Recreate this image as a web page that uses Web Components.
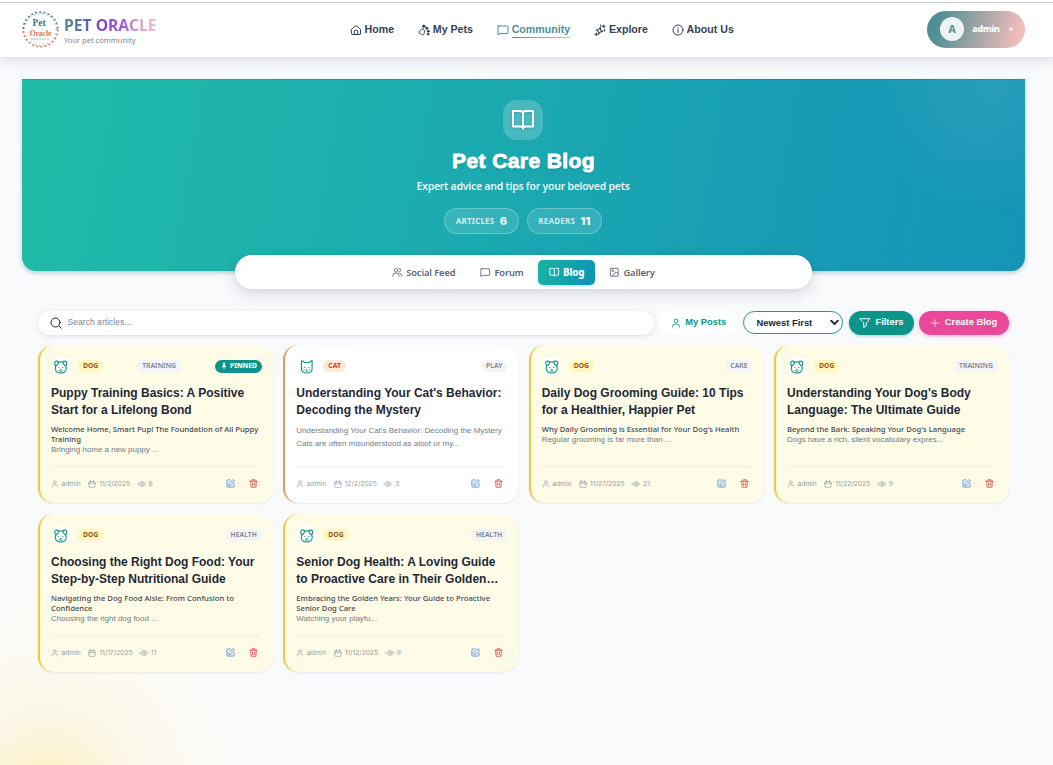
<!DOCTYPE html>
<html lang="en">
<head>
<meta charset="utf-8">
<title>Pet Oracle</title>
<style>
  :root {
    --font-ui: "Noto Sans", "Open Sans", sans-serif;
    --font-head: "Liberation Sans", Arial, sans-serif;
    --teal: #0d9488;
    --ink: #1f2937;
  }
  * { box-sizing: border-box; }
  html, body { height: 100%; }
  body { margin: 0; overflow: hidden; font-family: var(--font-ui); color: var(--ink); }
</style>
</head>
<body>
<pet-app></pet-app>

<script>
/* 24x24 stroke icons, shared by every component through <pet-icon name="…">. */
const ICONS = {
  home: '<path d="M3 10.500 12 3l9 7.500V20a1 1 0 0 1-1 1H4a1 1 0 0 1-1-1z"/><path d="M8.500 21v-7a1.500 1.500 0 0 1 1.500-1.500h4a1.500 1.500 0 0 1 1.500 1.500v7"/>',
  paw: '<path d="M10.500 10.500c-2.500-1.500-5.500.5-5.500 3-3.500.5-4 4.500-1.500 5.500s3 .5 4 2 4.500 1 5-2c.3-2-.5-3 .5-4.500s-.5-3-2.500-4z"/><circle cx="11.500" cy="4.500" r="2.400" fill="currentColor"/><circle cx="17.500" cy="8.500" r="2.200" fill="currentColor"/><circle cx="20.500" cy="14.500" r="1.900" fill="currentColor"/><circle cx="20" cy="20.500" r="1.700" fill="currentColor"/>',
  message: '<path d="M3 4h18a1 1 0 0 1 1 1v13a1 1 0 0 1-1 1H6l-4 3V5a1 1 0 0 1 1-1z"/>',
  sparkles: '<path d="M11 6.500 13 11.500l5 2-5 2-2 5-2-5-5-2 5-2z" transform="rotate(14 11 13.500)"/><path d="M19.500 2v5M17 4.500h5M13.500 2v2.500M21 10.500v3.500M4.500 18v5M2 20.500h5" stroke-width="2.400"/>',
  info: '<circle cx="12" cy="12" r="10"/><path d="M12 11v6M12 7v.5"/>',
  book: '<path d="M12 21V5.500C12 4 10.500 3 9 3H2v15.500h7.500c1.500 0 2.500.8 2.500 2 0-1.200 1-2 2.500-2H22V3h-7c-1.500 0-3 1-3 2.500"/>',
  users: '<circle cx="9" cy="7.500" r="4"/><path d="M2 21v-2a5 5 0 0 1 5-5h4a5 5 0 0 1 5 5v2M16 3.500a4 4 0 0 1 0 8M18 14.500a5 5 0 0 1 4 4.500v2"/>',
  photo: '<rect x="3" y="3" width="18" height="18" rx="2"/><circle cx="8.500" cy="8.500" r="1.800"/><path d="m6 21 10-10 5 5"/>',
  search: '<circle cx="11" cy="11" r="9"/><path d="m18 18 4.500 4.500"/>',
  user: '<circle cx="12" cy="7" r="4.500"/><path d="M4 22v-2.500a4.500 4.500 0 0 1 4.500-4.500h7a4.500 4.500 0 0 1 4.500 4.500V22"/>',
  filter: '<path d="M2 3.500h20l-7.500 9V18L9.500 21v-8.500z"/>',
  plus: '<path d="M12 2v20M2 12h20"/>',
  calendar: '<rect x="2.500" y="5" width="19" height="17" rx="2"/><path d="M2.500 11h19M7.500 2v5M16.500 2v5"/>',
  eye: '<path d="M1 12c3-4.500 6.500-7 11-7s8 2.500 11 7c-3 4.500-6.500 7-11 7s-8-2.500-11-7z"/><circle cx="12" cy="12" r="3.500"/>',
  edit: '<path d="M11 2.500H4.500a2 2 0 0 0-2 2v15a2 2 0 0 0 2 2h15a2 2 0 0 0 2-2V13"/><path d="M8 16.500V12L18.500 1.500l4 4L12.500 16.500z"/>',
  trash: '<path d="M2 6h20M8 6V2h8v4M4.500 6l1 16h13l1-16M9.500 11v6M14.500 11v6"/>',
  pin: '<path d="M8 2h8v2h-1v6l3 3.500V16h-5v6h-2v-6H6v-2.500L9 10V4H8z" fill="currentColor" stroke="none"/>',
  chevron: '<path d="m3 7 9 9 9-9"/>',
  dog: '<path d="M8.500 4C7 1 1.200 1 1.200 5.500c0 2 1 3.500 2 5C5 9.500 7.500 7.500 8.500 4zM15.500 4c1.500-3 7.300-3 7.300 1.500 0 2-1 3.500-2 5-1.800-1-4.300-3-5.300-6.500z"/><path d="M8.500 4c2-.8 5-.8 7 0M3.200 10.500C1.800 13 2 16 3 18.500 4.800 21.800 8 23 12 23s7.200-1.200 9-4.500c1-2.500 1.200-5.500-.2-8"/><path d="M8.500 13v.4M15.500 13v.4M11.500 16.500h1M9.500 19.300c1.500.8 3.500.8 5 0"/>',
  cat: '<path d="M2.500 1.500c2.500.2 4.500 1.500 5.500 3h8c1-1.500 3-2.800 5.500-3V15c0 4.500-3 8-9.500 8s-9.500-3.500-9.500-8z"/><path d="M8.500 13v.4M15.500 13v.4M12 17v.3M7 17.500h.3M16.700 17.500h.3M10.500 19.500h3"/>',
};

function esc(s) {
  return String(s).replace(/[&<>"]/g, (c) => ({ "&": "&amp;", "<": "&lt;", ">": "&gt;", '"': "&quot;" }[c]));
}

/* Attaches an open root holding the element's styles and markup. */
class PetElement extends HTMLElement {
  connectedCallback() {
    if (this.shadowRoot) return;
    this.attachShadow({ mode: "open" }).innerHTML =
      `<style>*{box-sizing:border-box}${this.css()}</style>${this.html()}`;
  }
  css() { return ""; }
  html() { return "<slot></slot>"; }
}

class PetIcon extends PetElement {
  css() {
    return `:host{display:block;flex:none;width:12px;height:12px}
      svg{display:block;width:100%;height:100%;fill:none;stroke:currentColor;
      stroke-linecap:round;stroke-linejoin:round;overflow:visible}`;
  }
  html() {
    return `<svg viewBox="0 0 24 24" stroke-width="${this.getAttribute("weight") || 2}" aria-hidden="true">${ICONS[this.getAttribute("name")]}</svg>`;
  }
}

class PetLogo extends PetElement {
  css() {
    return `
:host { display: flex; align-items: center; gap: 5px; }
svg { width: 37px; height: 37px; flex: none; display: block; }
.words { padding-top: 3px; }
.name { font: 700 15.700px/18px var(--font-ui); letter-spacing: 0; white-space: nowrap;
  background: linear-gradient(90deg, #4f8f92 0%, #5d6bb0 22%, #8044cc 42%, #9c5bd0 62%, #d9a0d0 82%, #efc0cb 100%);
  -webkit-background-clip: text; background-clip: text; color: transparent; }
.sub { font: 400 7.5px/11px var(--font-ui); color: #7d8790; margin-top: 1px; }`;
  }
  html() {
    return `
<svg viewBox="0 0 37 37">
  <defs><linearGradient id="ring" x1="0" y1="0" x2="0" y2="1">
    <stop offset=".48" stop-color="#4d7f83"/><stop offset=".56" stop-color="#d9785e"/>
  </linearGradient></defs>
  <circle cx="18.500" cy="18.500" r="17.300" fill="none" stroke="url(#ring)" stroke-width="1.500" stroke-dasharray="2 2.200"/>
  <circle cx="18.500" cy="18.500" r="15.800" fill="none" stroke="url(#ring)" stroke-width="1" stroke-dasharray="1 3.200"/>
  <text x="17" y="15" text-anchor="middle" font-family="Liberation Serif, serif" font-weight="700" font-size="9.500" fill="#3f767b">Pet</text>
  <text x="18.500" y="25" text-anchor="middle" font-family="Liberation Serif, serif" font-weight="700" font-size="7.500" fill="#db6f55">Oracle</text>
  <path d="M9 28h19" stroke="#8b9a9c" stroke-width=".8" stroke-dasharray="2 .7"/>
</svg>
<div class="words"><div class="name">PET ORACLE</div><div class="sub">Your pet community</div></div>`;
  }
}

class PetNavLink extends PetElement {
  css() {
    return `
:host { display: flex; align-items: center; gap: 2.500px; color: #374151;
  font: 700 10.650px/15px var(--font-head); white-space: nowrap; }
:host([active]) { color: #4f8f92; }
:host([active]) span { background: linear-gradient(90deg, #4f8f92, #e3b3b3) left bottom / 100% 1px no-repeat; }
span { padding-bottom: 1px; }
pet-icon { margin-top: 1px; }`;
  }
  html() {
    return `<pet-icon name="${this.getAttribute("icon")}"></pet-icon><span><slot></slot></span>`;
  }
}

class PetHeader extends PetElement {
  css() {
    return `
:host { display: grid; grid-template-columns: 328px auto 1fr; align-items: center; height: 58px;
  padding: 2px 28px 0 22px; background: #fff; border-bottom: 1px solid #dfe2e3;
  box-shadow: inset 0 2px #fff, inset 0 3px #c8cdce, 0 2px 13px rgba(15,23,42,.13); position: relative; z-index: 1; }
nav { display: flex; gap: 24.200px; }
.user { justify-self: end; display: flex; align-items: center; width: 98px; height: 37px; padding-left: 13px;
  border-radius: 19px; background: linear-gradient(105deg, #4f8f92 12%, #f2bcbc 92%); color: #fff; margin-bottom: 1px; }
.avatar { width: 24px; height: 24px; border-radius: 50%; background: #eef3f5; color: #4f8f92;
  font: 700 11px/24px var(--font-ui); text-align: center; }
.who { font: 800 9.3px/14px var(--font-ui); letter-spacing: -.45px; margin: -1px 9px 0 8px; width: 28px; }
.dot { width: 4px; height: 4px; border-radius: 50%; background: #fbe6e6; }`;
  }
  html() {
    return `
<pet-logo></pet-logo>
<nav>
  <pet-nav-link icon="home">Home</pet-nav-link>
  <pet-nav-link icon="paw">My Pets</pet-nav-link>
  <pet-nav-link icon="message" active>Community</pet-nav-link>
  <pet-nav-link icon="sparkles">Explore</pet-nav-link>
  <pet-nav-link icon="info">About Us</pet-nav-link>
</nav>
<div class="user"><div class="avatar">A</div><div class="who">admin</div><i class="dot"></i></div>`;
  }
}

class PetStat extends PetElement {
  css() {
    return `
:host { display: flex; align-items: center; gap: 5.500px; height: 26px; padding: 0 10.600px; border-radius: 13px;
  border: 1px solid rgba(255,255,255,.25); background: rgba(255,255,255,.12); color: #fff; }
.label { font: 700 8.100px/12px var(--font-ui); letter-spacing: .15px; color: rgba(255,255,255,.75); }
b { font: 800 11px/14px Inter, sans-serif; }`;
  }
  html() {
    return `<span class="label">${esc(this.getAttribute("label"))}</span><b><slot></slot></b>`;
  }
}

class PetHero extends PetElement {
  css() {
    return `
:host { display: flex; flex-direction: column; align-items: center; height: 192px; padding: 21px 1px 0 0;
  border-radius: 0 0 14px 14px; color: #fff;
  background: radial-gradient(circle at 97% 5%, rgba(255,255,255,.08), transparent 130px),
    linear-gradient(100deg, #20bba8 0%, #1ba9b0 48%, #179ab5 80%, #1594b6 100%);
  box-shadow: 0 2px 4px rgba(13,100,120,.3), inset 0 1px rgba(13,110,120,.25); }
.mark { width: 40px; height: 40px; border-radius: 14px; background: rgba(255,255,255,.2); display: grid; place-items: center; }
.mark pet-icon { width: 24px; height: 24px; filter: drop-shadow(0 1px 1px rgba(0,0,0,.15)); }
h1 { margin: 8px -1px 0 0; font: 700 21px/26px var(--font-head); letter-spacing: .4px; -webkit-text-stroke: .9px #fff;
  text-shadow: 0 1px 3px rgba(0,0,0,.2); }
p { margin: 5px 0 0; font: 600 10.5px/15px var(--font-ui); letter-spacing: -.26px; color: rgba(255,255,255,.93); }
.stats { display: flex; gap: 8px; margin-top: 14px; }`;
  }
  html() {
    return `
<div class="mark"><pet-icon name="book" weight="1.900"></pet-icon></div>
<h1>Pet Care Blog</h1>
<p>Expert advice and tips for your beloved pets</p>
<div class="stats"><pet-stat label="ARTICLES">6</pet-stat><pet-stat label="READERS">11</pet-stat></div>`;
  }
}

class PetTab extends PetElement {
  css() {
    return `
:host { display: flex; align-items: center; gap: 3.500px; height: 25px; padding: 0 11px; border-radius: 5px;
  font: 600 9.3px/14px var(--font-ui); letter-spacing: -.1px; color: #5b6472; white-space: nowrap; }
:host([active]) { color: #fff; background: linear-gradient(110deg, #16b5a4, #0c93b2);
  box-shadow: 0 1px 3px rgba(13,148,136,.35); font-weight: 800; font-size: 9.900px; letter-spacing: -.2px; gap: 4px; }
span { margin-top: 1px; }
:host([active]) span { margin-top: -1px; }
pet-icon { width: 10.5px; height: 10.5px; }`;
  }
  html() {
    return `<pet-icon name="${this.getAttribute("icon")}"></pet-icon><span><slot></slot></span>`;
  }
}

class PetTabs extends PetElement {
  css() {
    return `
:host { display: flex; align-items: center; justify-content: center; gap: 3px; width: 577px; height: 34px;
  margin: -16px auto 0; border-radius: 17px; background: #fff;
  box-shadow: 0 5px 16px rgba(15,23,42,.13), 0 2px 5px rgba(15,23,42,.05); position: relative; }`;
  }
}

class PetButton extends PetElement {
  css() {
    return `
:host { display: flex; align-items: center; justify-content: center; gap: 4.500px; height: 24px; padding: 0 10px;
  border-radius: 12px; font: 700 9.35px/14px var(--font-head); white-space: nowrap; flex: none;
  background: #fff; color: var(--teal); }
:host([kind="filter"]) { background: var(--teal); color: #fff; box-shadow: 0 1px 3px rgba(13,148,136,.4); gap: 4px; }
:host([kind="create"]) { background: #ec4899; color: #fff; box-shadow: 0 1px 4px rgba(236,72,153,.4); gap: 6px; }
span { margin-top: -2px; }`;
  }
  html() {
    const size = this.getAttribute("size") || 12;
    return `<pet-icon name="${this.getAttribute("icon")}" style="width:${size}px;height:${size}px"></pet-icon><span><slot></slot></span>`;
  }
}

class PetToolbar extends PetElement {
  css() {
    return `
:host { display: flex; gap: 5px; height: 24px; margin-top: 22px; }
.search { flex: 1; display: flex; align-items: center; gap: 6px; padding-left: 11.500px; border-radius: 12px;
  background: #fff; box-shadow: 0 1px 5px rgba(15,23,42,.12); color: #1f2937; }
.search span { font: 400 8.6px/12px var(--font-head); color: #7b8494; margin-top: -2px; }
.sort { position: relative; width: 100px; height: 23px; margin-right: 1px; }
select { appearance: none; display: block; margin: 0; width: 100%; height: 23px; padding: 0 0 0 12.500px; border: 1px solid #2b9389;
  border-radius: 12px; background: #fff; color: #1f2937; font: 700 9.4px/14px var(--font-head); }
.sort pet-icon { position: absolute; right: 4px; top: 7px; width: 9px; height: 9px; }
.mine { width: 79px; } .filter { width: 65px; } .create { width: 90px; }`;
  }
  html() {
    return `
<div class="search"><pet-icon name="search"></pet-icon><span>Search articles...</span></div>
<pet-button class="mine" icon="user" size="10">My Posts</pet-button>
<div class="sort"><select aria-label="Sort"><option>Newest First</option></select><pet-icon name="chevron" weight="5"></pet-icon></div>
<pet-button class="filter" kind="filter" icon="filter">Filters</pet-button>
<pet-button class="create" kind="create" icon="plus" size="8">Create Blog</pet-button>`;
  }
}

/**
 * <pet-card species="dog" topic="CARE" date="…" views="…" [pinned]>
 * slots: title, lead (bold heading of the article), default (excerpt text)
 */
class PetCard extends PetElement {
  css() {
    return `
:host { display: flex; flex-direction: column; height: 158px; padding: 10px 11px 8px 11px; border-radius: 15px;
  background: #fefbe6; border-left: 2px solid #eaca3f; box-shadow: 0 1px 2px rgba(15,23,42,.08); min-width: 0; }
:host([species="cat"]) { background: #fff; border-left-color: #e29a5c; }
.top { display: flex; align-items: center; justify-content: space-between; height: 22px; }
.kind { display: flex; align-items: center; gap: 7px; }
.face { width: 20px; height: 20px; border-radius: 50%; display: grid; place-items: center;
  background: rgba(255,255,255,.75); color: #17968a; }
.face pet-icon { width: 13.500px; height: 13.500px; margin-top: 1px; }
.tag { font: 700 6.8px/12px var(--font-ui); padding: 0 5px; height: 12px; border-radius: 6px; background: #fef5c0; color: #97591a; margin-top: -1px; }
:host([species="cat"]) .tag { background: #fee8d4; color: #bd4a1c; }
.topic { font: 600 6.8px/12px var(--font-ui); letter-spacing: .05px; padding: 0 5px; border-radius: 6px; background: #f2f4f6; color: #7c828e; margin-top: -1px; }
.pin { display: flex; align-items: center; gap: 2px; height: 13px; padding: 0 5px; border-radius: 7px; background: var(--teal);
  color: #fff; font: 800 6.8px/12px var(--font-ui); }
.pin pet-icon { width: 8px; height: 8px; }
h3 { margin: 8px -6px 0 0; font: 700 12px/17px var(--font-head); color: #1f2937; white-space: nowrap; }
.lead { margin: 5px 0 0; font: 500 7.680px/10px var(--font-ui); color: #3f4a56; white-space: nowrap; }
.text { margin-top: -1px; font: 400 7.970px/13px var(--font-head); color: #737b87; white-space: nowrap; }
:host([species="cat"]) .text { margin-top: 0; }
footer { display: flex; align-items: center; justify-content: space-between; margin: auto 2px 0 0; height: 29px; padding: 5px 2px 0 0;
  border-top: 1px solid rgba(100,116,139,.09); }
.meta { display: flex; gap: 7.500px; font: 400 6.7px/10px Inter, sans-serif; color: #969ba3; margin-top: 1px; }
.meta span { display: flex; align-items: center; gap: 3px; }
.meta pet-icon { width: 8px; height: 8px; }
.meta span:first-child pet-icon { width: 7.500px; height: 7.500px; }
.acts { display: flex; gap: 14px; color: #e04e4e; }
.acts pet-icon { width: 9px; height: 9px; }
.acts pet-icon:first-child { color: #4a88e0; }`;
  }
  html() {
    const a = (n) => esc(this.getAttribute(n));
    const pin = this.hasAttribute("pinned")
      ? '<div class="pin"><pet-icon name="pin"></pet-icon>PINNED</div>' : "";
    return `
<div class="top">
  <div class="kind"><div class="face"><pet-icon name="${a("species")}"></pet-icon></div><div class="tag">${a("species").toUpperCase()}</div></div>
  <div class="topic">${a("topic")}</div>${pin}
</div>
<h3><slot name="title"></slot></h3>
<div class="lead"><slot name="lead"></slot></div>
<div class="text"><slot></slot></div>
<footer>
  <div class="meta">
    <span><pet-icon name="user"></pet-icon>admin</span>
    <span><pet-icon name="calendar"></pet-icon>${a("date")}</span>
    <span><pet-icon name="eye"></pet-icon>${a("views")}</span>
  </div>
  <div class="acts"><pet-icon name="edit" weight="2.300"></pet-icon><pet-icon name="trash" weight="2.300"></pet-icon></div>
</footer>`;
  }
}

const POSTS = [
  { species: "dog", topic: "TRAINING", pinned: true, date: "11/2/2025", views: 6,
    title: ["Puppy Training Basics: A Positive", "Start for a Lifelong Bond"],
    lead: ["Welcome Home, Smart Pup! The Foundation of All Puppy", "Training"], text: ["Bringing home a new puppy ..."] },
  { species: "cat", topic: "PLAY", date: "12/2/2025", views: 3,
    title: ["Understanding Your Cat's Behavior:", "Decoding the Mystery"],
    lead: [], text: ["Understanding Your Cat's Behavior: Decoding the Mystery", "Cats are often misunderstood as aloof or my..."] },
  { species: "dog", topic: "CARE", date: "11/27/2025", views: 21,
    title: ["Daily Dog Grooming Guide: 10 Tips", "for a Healthier, Happier Pet"],
    lead: ["Why Daily Grooming is Essential for Your Dog's Health"], text: ["Regular grooming is far more than ..."] },
  { species: "dog", topic: "TRAINING", date: "11/22/2025", views: 9,
    title: ["Understanding Your Dog's Body", "Language: The Ultimate Guide"],
    lead: ["Beyond the Bark: Speaking Your Dog's Language"], text: ["Dogs have a rich, silent vocabulary expres..."] },
  { species: "dog", topic: "HEALTH", date: "11/17/2025", views: 11,
    title: ["Choosing the Right Dog Food: Your", "Step-by-Step Nutritional Guide"],
    lead: ["Navigating the Dog Food Aisle: From Confusion to", "Confidence"], text: ["Choosing the right dog food ..."] },
  { species: "dog", topic: "HEALTH", date: "11/12/2025", views: 9,
    title: ["Senior Dog Health: A Loving Guide", "to Proactive Care in Their Golden…"],
    lead: ["Embracing the Golden Years: Your Guide to Proactive", "Senior Dog Care"], text: ["Watching your playfu..."] },
];

class PetApp extends PetElement {
  css() {
    return `
:host { display: block; height: 765px; overflow: hidden;
  background: radial-gradient(circle at 48px 790px, rgba(253,236,170,.75) 0, rgba(253,243,205,.5) 70px, rgba(253,249,232,.35) 150px, transparent 250px), #f9fafc; }
main { padding: 21px 28px 0 22px; }
.body { padding: 0 16px; }
.grid { display: grid; grid-template-columns: repeat(4, minmax(0, 1fr)); gap: 11px 10.400px; margin-top: 10px; }`;
  }
  html() {
    const lines = (l) => l.map(esc).join("<br>");
    return `
<pet-header></pet-header>
<main>
  <pet-hero></pet-hero>
  <pet-tabs>
    <pet-tab icon="users">Social Feed</pet-tab>
    <pet-tab icon="message">Forum</pet-tab>
    <pet-tab icon="book" active>Blog</pet-tab>
    <pet-tab icon="photo">Gallery</pet-tab>
  </pet-tabs>
  <div class="body">
    <pet-toolbar></pet-toolbar>
    <div class="grid">${POSTS.map((p) => `
      <pet-card species="${p.species}" topic="${p.topic}" date="${p.date}" views="${p.views}" ${p.pinned ? "pinned" : ""}>
        <span slot="title">${lines(p.title)}</span>
        <span slot="lead">${lines(p.lead)}</span>
        ${lines(p.text)}
      </pet-card>`).join("")}
    </div>
  </div>
</main>`;
  }
}

customElements.define("pet-icon", PetIcon);
customElements.define("pet-logo", PetLogo);
customElements.define("pet-nav-link", PetNavLink);
customElements.define("pet-header", PetHeader);
customElements.define("pet-stat", PetStat);
customElements.define("pet-hero", PetHero);
customElements.define("pet-tab", PetTab);
customElements.define("pet-tabs", PetTabs);
customElements.define("pet-button", PetButton);
customElements.define("pet-toolbar", PetToolbar);
customElements.define("pet-card", PetCard);
customElements.define("pet-app", PetApp);
</script>
</body>
</html>
